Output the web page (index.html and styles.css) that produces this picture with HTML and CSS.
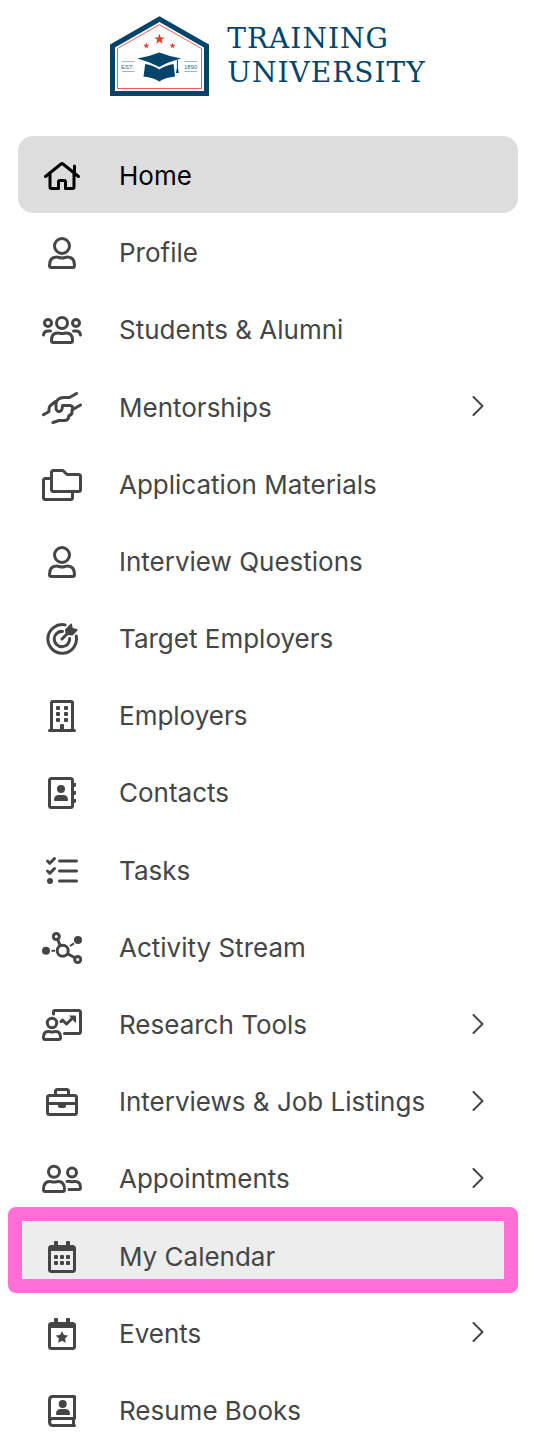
FILE: index.html
```html
<!doctype html>
<html lang="en">
  <head>
    <meta charset="utf-8">
    <meta name="viewport" content="width=device-width, initial-scale=1">
    <title>Training University</title>
    <link rel="stylesheet" href="styles.css">
  </head>
  <body>
    <header class="header">
      <a class="logo" href="#">
        <svg class="crest" viewBox="0 0 99 80" aria-hidden="true">
          <path class="navy-line" d="M2.5 30V77.5H96.5V30L49.5 3.2z" stroke-width="5"/>
          <path class="red-line" d="M7.5 32.5V72.5H91.5V32.5L49.5 8.7z"/>
          <g class="red">
            <path d="M49.5 17.6l1.3 3.8h4l-3.2 2.4 1.2 3.9-3.3-2.3-3.3 2.3 1.2-3.9-3.2-2.4h4z"/>
            <path d="M36.3 26.6l.7 2.2h2.3l-1.8 1.4.7 2.2-1.9-1.3-1.9 1.3.7-2.2-1.8-1.4h2.3z"/>
            <path d="M62.5 26.6l.7 2.2h2.3l-1.8 1.4.7 2.2-1.9-1.3-1.9 1.3.7-2.2-1.8-1.4h2.3z"/>
          </g>
          <g class="navy">
            <path d="M27.3 42.6Q39 40.5 49.3 36.4Q60 40.5 71.3 42.6Q59 45.6 49.3 51Q39 45.6 27.3 42.6z"/>
            <path d="M35.2 48Q43 49 49.3 53.6Q56 49 63.6 48L65 60.5Q55 61.5 49.3 65.4Q43.5 61.5 33.5 60.5z"/>
            <path d="M66.9 44h1v8l1 5h-3l1-5z"/>
          </g>
          <path class="rule" d="M12 45.5h12.5M12 55.5h12.5M74.5 45.5h12.5M74.5 55.5h12.5"/>
          <text class="crest-text" x="11" y="53">EST.</text>
          <text class="crest-text" x="74" y="53">1890</text>
        </svg>
        <span class="wordmark">
          <span>TRAINING</span>
          <span>UNIVERSITY</span>
        </span>
      </a>
    </header>

    <nav class="nav" aria-label="Main">
      <ul class="menu">
        <li class="item">
          <a class="link active" href="#">
            <svg class="icon" viewBox="0 0 40 32"><path d="M3.5 16.5L19 4Q20 3.2 21 4L36.5 16.5M32.5 12V6M8 14v13q0 1.5 1.5 1.5h7v-6.500q0-1.5 1.5-1.5h4q1.5 0 1.5 1.5v6.5h7q1.5 0 1.5-1.5V14"/></svg>
            <span class="label">Home</span>
          </a>
        </li>
        <li class="item">
          <a class="link" href="#">
            <svg class="icon" viewBox="0 0 40 32"><circle cx="20" cy="9" r="7.5"/><path d="M7.5 28.5c0-5.5 2.5-8.5 7-8.5 2 0 3 1 5.5 1s3.5-1 5.5-1c4.5 0 7 3 7 8.5q0 2-2 2h-21q-2 0-2-2z"/></svg>
            <span class="label">Profile</span>
          </a>
        </li>
        <li class="item">
          <a class="link" href="#">
            <svg class="icon" viewBox="0 0 40 32"><circle cx="20" cy="9" r="5.5"/><circle cx="6" cy="9" r="3.5"/><circle cx="34" cy="9" r="3.5"/><path d="M9.5 26.5c0-4.5 2-7.5 6-7.5 1.5 0 2.5.5 4.5.5s3-.5 4.5-.5c4 0 6 3 6 7.5q0 2-2 2h-17q-2 0-2-2zM1.5 21q.5-4 4.5-4h2.5M38.5 21q-.5-4-4.5-4h-2.5"/></svg>
            <span class="label">Students &amp; Alumni</span>
          </a>
        </li>
        <li class="item">
          <a class="link" href="#">
            <svg class="icon" viewBox="0 0 40 32"><path d="M34.5 1.5L27.5 5.5H22C17 5.5 14 8.500 14 12V15.5C14 18 15.5 20 17.5 19.5C20 19 20.5 17 20.5 13.5H28Q31 13.5 30.5 17M38.5 13L30 18V20Q30 23 27 23.5Q26.5 28.5 22.5 28.5H17L11 30.5M13.5 9.5L9 13Q7 14.5 7 17V19.5L1.5 22.8"/></svg>
            <span class="label">Mentorships</span>
            <svg class="chevron" viewBox="0 0 12 20"><path d="M1.5 1L10.5 10L1.5 19"/></svg>
          </a>
        </li>
        <li class="item">
          <a class="link" href="#">
            <svg class="icon" viewBox="0 0 40 32"><path d="M11.5 1.5h8.5q1 0 1.5.5l3 3q.5.5 1.5.5h10.5q2 0 2 2v13q0 2-2 2h-25q-2 0-2-2v-17q0-2 2-2zM8 9.5H3.5q-2 0-2 2v17q0 2 2 2h25q2 0 2-2V24"/></svg>
            <span class="label">Application Materials</span>
          </a>
        </li>
        <li class="item">
          <a class="link" href="#">
            <svg class="icon" viewBox="0 0 40 32"><circle cx="20" cy="9" r="7.5"/><path d="M7.5 28.5c0-5.5 2.5-8.5 7-8.5 2 0 3 1 5.5 1s3.5-1 5.5-1c4.5 0 7 3 7 8.5q0 2-2 2h-21q-2 0-2-2z"/></svg>
            <span class="label">Interview Questions</span>
          </a>
        </li>
        <li class="item">
          <a class="link" href="#">
            <svg class="icon" viewBox="0 0 40 32"><path d="M23 1.9A14.3 14.3 0 1 0 34.2 13M20.5 8.4A7.7 7.7 0 1 0 27.6 15.5M20 16L28 8"/><path class="solid" d="M23 6.500L28.700.7Q29.700 0 30 1.200L30.700 5L34.900 6Q36 6.500 35.500 7.500L30.500 12.500L25 12Q23.500 11.500 23.500 10z"/></svg>
            <span class="label">Target Employers</span>
          </a>
        </li>
        <li class="item">
          <a class="link" href="#">
            <svg class="icon" viewBox="0 0 40 32"><path d="M9.5 30V3q0-1.5 1.5-1.5h18q1.5 0 1.5 1.5v27M7.5 30.5h25"/><g class="solid"><rect x="14" y="6" width="4" height="4" rx="1"/><rect x="22" y="6" width="4" height="4" rx="1"/><rect x="14" y="12" width="4" height="4" rx="1"/><rect x="22" y="12" width="4" height="4" rx="1"/><rect x="14" y="18" width="4" height="4" rx="1"/><rect x="22" y="18" width="4" height="4" rx="1"/><path d="M18 30v-5q0-1 1-1h2q1 0 1 1v5z"/></g></svg>
            <span class="label">Employers</span>
          </a>
        </li>
        <li class="item">
          <a class="link" href="#">
            <svg class="icon" viewBox="0 0 40 32"><rect x="7.5" y="1.5" width="23" height="29" rx="2"/><g class="solid"><circle cx="19" cy="12" r="4"/><path d="M12 23q0-5 5-5h4q5 0 5 5 0 1-1 1H13q-1 0-1-1z"/><path d="M31 6h3v3l-1 1h-2zM31 14h3v3l-1 1h-2zM31 22h3v3l-1 1h-2z"/></g></svg>
            <span class="label">Contacts</span>
          </a>
        </li>
        <li class="item">
          <a class="link" href="#">
            <svg class="icon" viewBox="0 0 40 32"><path d="M5.5 6l2.3 2.3 4.7-4.800M5.5 16l2.3 2.3 4.7-4.800M17.5 6h17M17.5 16h17M17.5 26h17"/><circle class="solid" cx="8" cy="26" r="3"/></svg>
            <span class="label">Tasks</span>
          </a>
        </li>
        <li class="item">
          <a class="link" href="#">
            <svg class="icon" viewBox="0 0 40 32"><circle cx="20.7" cy="18.8" r="5.5"/><circle cx="14.3" cy="4.5" r="3"/><circle cx="35.7" cy="27.5" r="3"/><path d="M15.8 8l2.2 5M26 22l6.5 3.5"/><path class="dash" d="M9.5 18.8h3.5M28 14l4-2.7"/><g class="solid"><circle cx="4" cy="18.8" r="4"/><circle cx="36" cy="8" r="4"/></g></svg>
            <span class="label">Activity Stream</span>
          </a>
        </li>
        <li class="item">
          <a class="link" href="#">
            <svg class="icon" viewBox="0 0 40 32"><circle cx="10" cy="14" r="4.7"/><path d="M1.5 28.5c0-3.5 1.5-6 4.500-6 1.5 0 2.5.5 4 .5s2.5-.5 4-.5c3 0 4.5 2.5 4.5 6q0 2-2 2h-13q-2 0-2-2zM11.5 5V3q0-1.5 1.5-1.5h23.5q2 0 2 2v19q0 2-2 2H22.5M19 12.5l1.5-1.5 4 4 6.500-6.500"/><path class="solid" d="M27 6.5h6q1 0 1 1v6h-1z"/></svg>
            <span class="label">Research Tools</span>
            <svg class="chevron" viewBox="0 0 12 20"><path d="M1.5 1L10.5 10L1.5 19"/></svg>
          </a>
        </li>
        <li class="item">
          <a class="link" href="#">
            <svg class="icon" viewBox="0 0 40 32"><rect x="5.5" y="9.5" width="29" height="19" rx="2"/><path d="M13.5 9V5.5q0-2 2-2h9q2 0 2 2V9M5.5 17.5h29"/><path class="solid" d="M16 17h8v3q0 2-2 2h-4q-2 0-2-2z"/></svg>
            <span class="label">Interviews &amp; Job Listings</span>
            <svg class="chevron" viewBox="0 0 12 20"><path d="M1.5 1L10.5 10L1.5 19"/></svg>
          </a>
        </li>
        <li class="item">
          <a class="link" href="#">
            <svg class="icon" viewBox="0 0 40 32"><circle cx="12" cy="8.8" r="5.5"/><circle cx="30" cy="9.5" r="4.5"/><path d="M1.5 26.5c0-5 2-8 6-8 1.5 0 2.5.5 4.5.5s3-.5 4.5-.5c4 0 6 3 6 8q0 2-2 2h-17q-2 0-2-2zM25 18.5c2-.5 3 .3 5 .3s2.500-.5 4-.3c3 .3 4.5 2.5 4.5 6q0 2-2 2H27"/></svg>
            <span class="label">Appointments</span>
            <svg class="chevron" viewBox="0 0 12 20"><path d="M1.5 1L10.5 10L1.5 19"/></svg>
          </a>
        </li>
        <li class="item highlighted">
          <a class="link" href="#">
            <svg class="icon" viewBox="0 0 40 32"><rect x="7.5" y="5.5" width="25" height="25" rx="2"/><g class="solid"><path d="M7 5h26v5H7zM12 5V1q0-1 1-1h2q1 0 1 1v4zM24 5V1q0-1 1-1h2q1 0 1 1v4z"/><rect x="12" y="14" width="4" height="4" rx="1"/><rect x="18" y="14" width="4" height="4" rx="1"/><rect x="24" y="14" width="4" height="4" rx="1"/><rect x="12" y="20" width="4" height="4" rx="1"/><rect x="18" y="20" width="4" height="4" rx="1"/><rect x="24" y="20" width="4" height="4" rx="1"/></g></svg>
            <span class="label">My Calendar</span>
          </a>
        </li>
        <li class="item">
          <a class="link" href="#">
            <svg class="icon" viewBox="0 0 40 32"><rect x="7.5" y="5.5" width="25" height="25" rx="2"/><g class="solid"><path d="M7 5h26v5H7zM12 5V1q0-1 1-1h2q1 0 1 1v4zM24 5V1q0-1 1-1h2q1 0 1 1v4z"/><path d="M20 13l1.9 3.9 4.3.6-3.1 3 .7 4.3-3.8-2-3.8 2 .7-4.3-3.1-3 4.3-.6z"/></g></svg>
            <span class="label">Events</span>
            <svg class="chevron" viewBox="0 0 12 20"><path d="M1.5 1L10.5 10L1.5 19"/></svg>
          </a>
        </li>
        <li class="item">
          <a class="link" href="#">
            <svg class="icon" viewBox="0 0 40 32"><path d="M32.5 1.5H11q-3.5 0-3.5 3.5v22q0 3.5 3.5 3.5h21.5M32.5 1.5v22H11q-3.5 0-3.5 3.5M31.5 23.5v7"/><g class="solid"><circle cx="20.7" cy="9" r="4"/><path d="M14 19q0-5 5-5h4q5 0 5 5 0 1-1 1H15q-1 0-1-1z"/></g></svg>
            <span class="label">Resume Books</span>
          </a>
        </li>
      </ul>
    </nav>
  </body>
</html>
```

FILE: styles.css
```css
* {
  box-sizing: border-box;
}
body {
  display: flex;
  flex-direction: column;
  min-height: 100vh;
  margin: 0;
  padding: 16px 20px 4px 18px;
  background: #fff;
  color: #454545;
  font-family: Inter, "Liberation Sans", sans-serif;
  font-size: 26px;
  line-height: 32px;
}

/* logo */
.header {
  display: flex;
  justify-content: center;
  margin-bottom: 40px;
}
.logo {
  display: flex;
  align-items: center;
  gap: 18px;
  color: #03456a;
  text-decoration: none;
}
.crest {
  width: 99px;
  height: 80px;
}
.navy-line {
  fill: none;
  stroke: #03456a;
}
.red-line {
  fill: none;
  stroke: #e8604f;
}
.red {
  fill: #e03c2b;
}
.navy {
  fill: #03456a;
}
.rule {
  stroke: #9db4c4;
}
.crest-text {
  fill: #3a6583;
  font-family: "Liberation Sans", sans-serif;
  font-size: 6px;
}
.wordmark {
  display: flex;
  flex-direction: column;
  font-family: "DejaVu Serif", serif;
  font-size: 28px;
  letter-spacing: 1px;
  line-height: 34px;
}

/* menu */
.nav {
  display: flex;
  flex: 1;
}
.menu {
  display: grid;
  flex: 1;
  grid-auto-rows: 1fr;
  margin: 0;
  padding: 0;
  list-style: none;
}
.item {
  display: flex;
  position: relative;
  min-height: 56px;
}
.link {
  display: flex;
  flex: 1;
  align-items: center;
  padding: 3px 34px 0 24px;
  border-radius: 15px;
  color: inherit;
  text-decoration: none;
}
.link.active {
  background: #ddd;
  color: #000;
}
.icon {
  flex: none;
  width: 40px;
  height: 32px;
  margin-right: 37px;
  fill: none;
  stroke: currentColor;
  stroke-width: 3;
  stroke-linecap: round;
  stroke-linejoin: round;
}
.solid {
  fill: currentColor;
  stroke: none;
}
.dash {
  stroke-width: 2;
  stroke-linecap: butt;
}
.label {
  flex: 1;
}
.chevron {
  flex: none;
  width: 12px;
  height: 20px;
  margin-bottom: 3px;
  fill: none;
  stroke: currentColor;
  stroke-width: 2;
  stroke-linecap: round;
  stroke-linejoin: round;
}

/* thick frame round the highlighted entry */
.highlighted {
  isolation: isolate;
}
.highlighted::before {
  position: absolute;
  z-index: -1;
  inset: -9px 0 1px -10px;
  border: 14px solid #ff6fd6;
  border-radius: 8px;
  background: #ededed;
  content: "";
}
```
